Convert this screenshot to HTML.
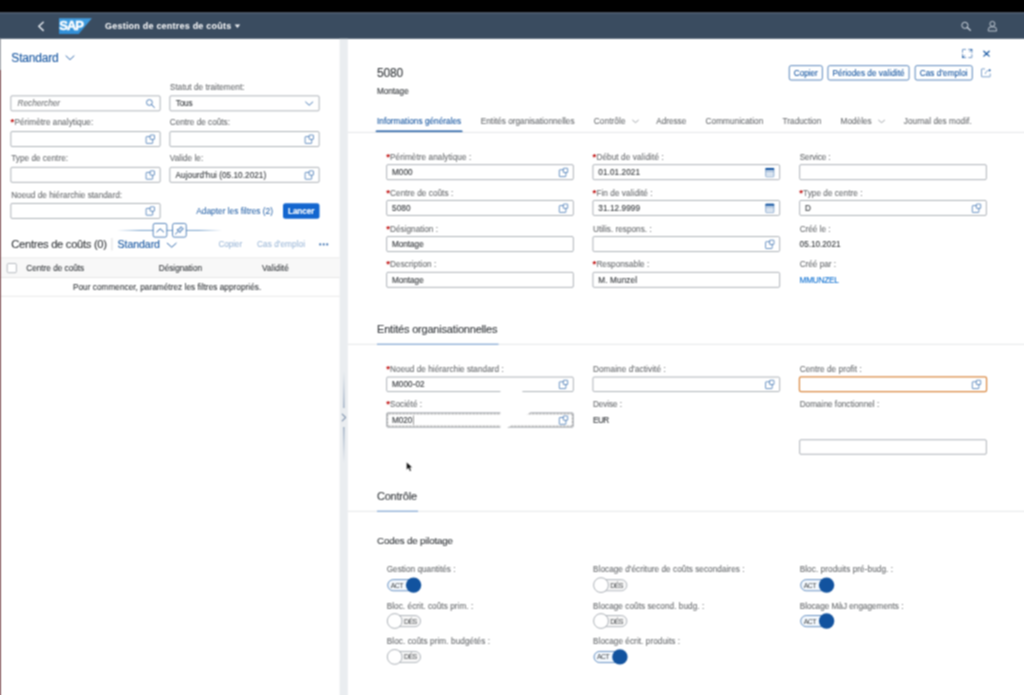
<!DOCTYPE html>
<html lang="fr"><head><meta charset="utf-8"><title>Gestion de centres de coûts</title>
<style>
html,body{margin:0;padding:0;background:#fff;}
body{width:1024px;height:695px;overflow:hidden;position:relative;font-family:"Liberation Sans",sans-serif;}
#root{position:absolute;left:0;top:0;width:1024px;height:695px;overflow:hidden;background:#fff;filter:url(#soft);}
#shapes{position:absolute;left:0;top:0;display:block;}
.t{position:absolute;display:block;white-space:pre;font-family:"Liberation Sans",sans-serif;}
</style></head><body><svg width="0" height="0" style="position:absolute"><filter id="soft" x="0" y="0" width="100%" height="100%" filterUnits="objectBoundingBox" color-interpolation-filters="sRGB"><feConvolveMatrix order="3" kernelMatrix="1 2 1 2 4 2 1 2 1" edgeMode="duplicate" preserveAlpha="true"/></filter></svg><div id="root">
<svg id="shapes" width="1024" height="695" viewBox="0 0 1024 695">
<defs><linearGradient id="gr1" x1="0" y1="0" x2="0" y2="1"><stop offset="0" stop-color="#eaedf0"/><stop offset="1" stop-color="#94a6bd"/></linearGradient><linearGradient id="gr2" x1="0" y1="0" x2="0" y2="1"><stop offset="0" stop-color="#94a6bd"/><stop offset="1" stop-color="#eaedf0"/></linearGradient><linearGradient id="sapg" x1="0" y1="0" x2="0" y2="1"><stop offset="0" stop-color="#429fe2"/><stop offset="1" stop-color="#2f8dd6"/></linearGradient><linearGradient id="gl" x1="0" y1="0" x2="1" y2="0"><stop offset="0" stop-color="#0854a0" stop-opacity="0"/><stop offset="0.22" stop-color="#0854a0" stop-opacity="0.55"/><stop offset="0.78" stop-color="#0854a0" stop-opacity="0.55"/><stop offset="1" stop-color="#0854a0" stop-opacity="0"/></linearGradient></defs>
<rect x="0" y="0" width="1024" height="12.7" fill="#000"/>
<rect x="0" y="12.7" width="1024" height="26.1" fill="#3a4c60"/>
<rect x="0" y="12.7" width="1024" height="1" fill="#52627a"/>
<rect x="0" y="38.8" width="1" height="31.5" fill="#a3a6ab"/>
<rect x="0" y="70" width="1" height="625" fill="#85585c"/>
<rect x="339.6" y="38.8" width="8.2" height="657" fill="#eaedf0"/>
<rect x="343.2" y="371" width="1.3" height="37" fill="url(#gr1)"/>
<rect x="343.2" y="427" width="1.3" height="36" fill="url(#gr2)"/>
<g transform="translate(341 413)"><path d="M1.2 1.2L4.6 4.5L1.2 7.8" fill="none" stroke="#7f93ad" stroke-width="1.1" stroke-linecap="round" stroke-linejoin="round"/></g>
<g transform="translate(37 21)"><path d="M6.2 1.2L1.8 5.3L6.2 9.4" fill="none" stroke="#e3e8ee" stroke-width="1.5" stroke-linecap="round" stroke-linejoin="round"/></g>
<g transform="translate(59 18.2)"><path d="M0 0H32.9L19.7 15.7H0Z" fill="url(#sapg)"/><text x="0.3" y="12.3" font-family="Liberation Sans, sans-serif" font-weight="bold" font-size="12.6" fill="#fff" stroke="#fff" stroke-width="0.45" textLength="23.6" lengthAdjust="spacingAndGlyphs" letter-spacing="-1">SAP</text></g>
<g transform="translate(234.4 24.3)"><path d="M0.2 0.3H5.8L3 3.7Z" fill="#eef1f5"/></g>
<g transform="translate(960 21)"><circle cx="4.9" cy="4.3" r="3.1" fill="none" stroke="#cdd5de" stroke-width="1.0"/><path d="M7.3 6.6L10.3 9.2" stroke="#cdd5de" stroke-width="1.3" stroke-linecap="round"/></g>
<g transform="translate(987 20)"><circle cx="5.4" cy="3.9" r="2.5" fill="none" stroke="#cdd5de" stroke-width="0.9"/><path d="M1.3 11V9.6Q1.3 6.9 4 6.9H6.8Q9.5 6.9 9.5 9.6V11Z" fill="none" stroke="#cdd5de" stroke-width="0.9" stroke-linejoin="round"/></g>
<g transform="translate(65.6 55.7)"><path d="M0.4 0.2L4.4 4L8.4 0.2" fill="none" stroke="#12539f" stroke-width="0.85" stroke-linecap="round" stroke-linejoin="round"/></g>
<rect x="10.85" y="95.85" width="149.3" height="15" fill="#fff" stroke="#89919a" stroke-width="0.7" rx="1.25"/>
<rect x="169.85" y="95.85" width="149.3" height="15" fill="#fff" stroke="#89919a" stroke-width="0.7" rx="1.25"/>
<rect x="10.85" y="131.55" width="149.3" height="15" fill="#fff" stroke="#89919a" stroke-width="0.7" rx="1.25"/>
<rect x="169.85" y="131.55" width="149.3" height="15" fill="#fff" stroke="#89919a" stroke-width="0.7" rx="1.25"/>
<rect x="10.85" y="167.35" width="149.3" height="15" fill="#fff" stroke="#89919a" stroke-width="0.7" rx="1.25"/>
<rect x="169.85" y="167.35" width="149.3" height="15" fill="#fff" stroke="#89919a" stroke-width="0.7" rx="1.25"/>
<rect x="10.85" y="203.45" width="149.3" height="15" fill="#fff" stroke="#89919a" stroke-width="0.7" rx="1.25"/>
<g transform="translate(145.5 98.6)"><circle cx="3.9" cy="3.9" r="2.9" fill="none" stroke="#12539f" stroke-width="0.7"/><path d="M6.1 6.1L8.9 8.9" stroke="#12539f" stroke-width="0.85" stroke-linecap="round"/></g>
<g transform="translate(305.2 101.8)"><path d="M0.4 0.2L4 3.4L7.6 0.2" fill="none" stroke="#12539f" stroke-width="0.75" stroke-linecap="round" stroke-linejoin="round"/></g>
<g transform="translate(145.8 134.7)"><path d="M4.3 1.9H0.9Q0.3 1.9 0.3 2.5V8.1Q0.3 8.7 0.9 8.7H6.3Q6.9 8.7 6.9 8.1V4.6" fill="none" stroke="#12539f" stroke-width="0.62"/><rect x="4.3" y="0.35" width="4.4" height="4.3" rx="0.5" fill="none" stroke="#12539f" stroke-width="0.62"/></g>
<g transform="translate(304.8 134.7)"><path d="M4.3 1.9H0.9Q0.3 1.9 0.3 2.5V8.1Q0.3 8.7 0.9 8.7H6.3Q6.9 8.7 6.9 8.1V4.6" fill="none" stroke="#12539f" stroke-width="0.62"/><rect x="4.3" y="0.35" width="4.4" height="4.3" rx="0.5" fill="none" stroke="#12539f" stroke-width="0.62"/></g>
<g transform="translate(145.8 170.5)"><path d="M4.3 1.9H0.9Q0.3 1.9 0.3 2.5V8.1Q0.3 8.7 0.9 8.7H6.3Q6.9 8.7 6.9 8.1V4.6" fill="none" stroke="#12539f" stroke-width="0.62"/><rect x="4.3" y="0.35" width="4.4" height="4.3" rx="0.5" fill="none" stroke="#12539f" stroke-width="0.62"/></g>
<g transform="translate(304.8 170.5)"><path d="M4.3 1.9H0.9Q0.3 1.9 0.3 2.5V8.1Q0.3 8.7 0.9 8.7H6.3Q6.9 8.7 6.9 8.1V4.6" fill="none" stroke="#12539f" stroke-width="0.62"/><rect x="4.3" y="0.35" width="4.4" height="4.3" rx="0.5" fill="none" stroke="#12539f" stroke-width="0.62"/></g>
<g transform="translate(145.8 206.5)"><path d="M4.3 1.9H0.9Q0.3 1.9 0.3 2.5V8.1Q0.3 8.7 0.9 8.7H6.3Q6.9 8.7 6.9 8.1V4.6" fill="none" stroke="#12539f" stroke-width="0.62"/><rect x="4.3" y="0.35" width="4.4" height="4.3" rx="0.5" fill="none" stroke="#12539f" stroke-width="0.62"/></g>
<rect x="283" y="203.2" width="36.5" height="15.6" fill="#1366cf" rx="2.5"/>
<rect x="117" y="229.9" width="105" height="1" fill="url(#gl)"/>
<rect x="153.15" y="223.45" width="13.7" height="13.7" fill="#fff" stroke="#12539f" stroke-width="0.7" rx="1.85"/>
<rect x="172.55" y="223.45" width="13.7" height="13.7" fill="#fff" stroke="#12539f" stroke-width="0.7" rx="1.85"/>
<g transform="translate(156.2 227.6)"><path d="M0.6 4.3L4 1.2L7.4 4.3" fill="none" stroke="#12539f" stroke-width="0.9" stroke-linecap="round" stroke-linejoin="round"/></g>
<g transform="translate(174.8 225.8)"><path d="M0.6 8.3L3.4 5.6" stroke="#12539f" stroke-width="0.8" stroke-linecap="round"/><path d="M2.2 3.9L5.2 6.9L5.8 5.6L8.6 3.2L6.2 0.8L3.6 3.5Z" fill="#c9daee" stroke="#12539f" stroke-width="0.7" stroke-linejoin="round"/></g>
<rect x="111.5" y="238" width="0.9" height="12.5" fill="#d9d9d9"/>
<g transform="translate(166.8 243)"><path d="M0.4 0.2L4.9 4.2L9.4 0.2" fill="none" stroke="#12539f" stroke-width="0.85" stroke-linecap="round" stroke-linejoin="round"/></g>
<circle cx="320.2" cy="244.4" r="1.1" fill="#12539f" opacity="0.8"/>
<circle cx="323.7" cy="244.4" r="1.1" fill="#12539f" opacity="0.8"/>
<circle cx="327.2" cy="244.4" r="1.1" fill="#12539f" opacity="0.8"/>
<rect x="1" y="257.7" width="338.6" height="20.2" fill="#f8f8f8"/>
<rect x="1" y="257.5" width="338.6" height="0.8" fill="#e6e6e6"/>
<rect x="1" y="277.2" width="338.6" height="0.8" fill="#e2e2e2"/>
<rect x="7.2" y="263.5" width="9.2" height="9.2" fill="#fff" stroke="#89919a" stroke-width="0.6" rx="1.3"/>
<rect x="1" y="295.8" width="338.6" height="0.8" fill="#e2e2e2"/>
<g transform="translate(962 48.9)"><g fill="none" stroke="#12539f" stroke-width="0.6" stroke-linecap="round" stroke-linejoin="round"><path d="M0.5 3.4V0.9Q0.5 0.5 0.9 0.5H3.6"/><path d="M9.9 5.8V8.3Q9.9 8.7 9.5 8.7H6.8"/><path d="M6.6 0.5H9.9V3.8M9.9 0.5L7.6 2.8"/><path d="M3.8 8.7H0.5V5.4M0.5 8.7L2.8 6.4"/></g><path d="M10.1 0.3V2.2L8.2 0.3Z M0.3 8.9V7L2.2 8.9Z" fill="#12539f"/></g>
<g transform="translate(983 50.5)"><path d="M0.8 0.7L6.2 5.6M6.2 0.7L0.8 5.6" stroke="#12539f" stroke-width="1.2" stroke-linecap="round"/></g>
<rect x="789.25" y="65.65" width="33.1" height="14.4" fill="#fff" stroke="#12539f" stroke-width="0.7" rx="1.85"/>
<rect x="827.95" y="65.65" width="81.1" height="14.4" fill="#fff" stroke="#12539f" stroke-width="0.7" rx="1.85"/>
<rect x="915.15" y="65.65" width="57.1" height="14.4" fill="#fff" stroke="#12539f" stroke-width="0.7" rx="1.85"/>
<g transform="translate(981 68)"><g fill="none" stroke="#12539f" stroke-width="0.6" stroke-linecap="round" stroke-linejoin="round" opacity="0.9"><path d="M3.6 0.9H1Q0.5 0.9 0.5 1.4V8.3Q0.5 8.8 1 8.8H8.7Q9.2 8.8 9.2 8.3V6"/><path d="M4.3 5.6Q4.7 2.4 9 2.2"/></g><path d="M8 0.7L10 2.2L8 3.7Z" fill="#12539f" opacity="0.85"/></g>
<rect x="375.6" y="130.4" width="87" height="2.1" fill="#12539f" rx="1"/>
<rect x="347.8" y="131.9" width="676.2" height="1" fill="#e4e6e8"/>
<g transform="translate(632.2 120)"><path d="M0.4 0.2L3.3 2.6L6.2 0.2" fill="none" stroke="#8c9095" stroke-width="0.8" stroke-linecap="round" stroke-linejoin="round"/></g>
<g transform="translate(878.2 120)"><path d="M0.4 0.2L3.4 2.6L6.4 0.2" fill="none" stroke="#8c9095" stroke-width="0.8" stroke-linecap="round" stroke-linejoin="round"/></g>
<rect x="386.65" y="164.65" width="186.7" height="15" fill="#fff" stroke="#89919a" stroke-width="0.7" rx="1.25"/>
<rect x="386.65" y="200.45" width="186.7" height="15" fill="#fff" stroke="#89919a" stroke-width="0.7" rx="1.25"/>
<rect x="386.65" y="236.55" width="186.7" height="15" fill="#fff" stroke="#89919a" stroke-width="0.7" rx="1.25"/>
<rect x="386.65" y="272.35" width="186.7" height="15" fill="#fff" stroke="#89919a" stroke-width="0.7" rx="1.25"/>
<rect x="592.95" y="164.65" width="186.7" height="15" fill="#fff" stroke="#89919a" stroke-width="0.7" rx="1.25"/>
<rect x="592.95" y="200.45" width="186.7" height="15" fill="#fff" stroke="#89919a" stroke-width="0.7" rx="1.25"/>
<rect x="592.95" y="236.55" width="186.7" height="15" fill="#fff" stroke="#89919a" stroke-width="0.7" rx="1.25"/>
<rect x="592.95" y="272.35" width="186.7" height="15" fill="#fff" stroke="#89919a" stroke-width="0.7" rx="1.25"/>
<rect x="799.65" y="164.65" width="186.7" height="15" fill="#fff" stroke="#89919a" stroke-width="0.7" rx="1.25"/>
<rect x="799.65" y="200.45" width="186.7" height="15" fill="#fff" stroke="#89919a" stroke-width="0.7" rx="1.25"/>
<g transform="translate(559 167.9)"><path d="M4.3 1.9H0.9Q0.3 1.9 0.3 2.5V8.1Q0.3 8.7 0.9 8.7H6.3Q6.9 8.7 6.9 8.1V4.6" fill="none" stroke="#12539f" stroke-width="0.62"/><rect x="4.3" y="0.35" width="4.4" height="4.3" rx="0.5" fill="none" stroke="#12539f" stroke-width="0.62"/></g>
<g transform="translate(559 203.7)"><path d="M4.3 1.9H0.9Q0.3 1.9 0.3 2.5V8.1Q0.3 8.7 0.9 8.7H6.3Q6.9 8.7 6.9 8.1V4.6" fill="none" stroke="#12539f" stroke-width="0.62"/><rect x="4.3" y="0.35" width="4.4" height="4.3" rx="0.5" fill="none" stroke="#12539f" stroke-width="0.62"/></g>
<g transform="translate(765.3 167.75)"><rect x="0.4" y="0.6" width="8.2" height="8.5" rx="0.7" fill="#edf2f8" stroke="#12539f" stroke-width="0.55" stroke-opacity="0.75"/><rect x="0.2" y="0.3" width="8.6" height="1.9" rx="0.5" fill="#12539f"/><path d="M0.4 3.5H8.6" stroke="#12539f" stroke-width="0.6" opacity="0.8"/><path d="M0.5 5.2H8.5M0.5 6.9H8.5" stroke="#12539f" stroke-width="0.45" opacity="0.35"/></g>
<g transform="translate(765.3 203.55)"><rect x="0.4" y="0.6" width="8.2" height="8.5" rx="0.7" fill="#edf2f8" stroke="#12539f" stroke-width="0.55" stroke-opacity="0.75"/><rect x="0.2" y="0.3" width="8.6" height="1.9" rx="0.5" fill="#12539f"/><path d="M0.4 3.5H8.6" stroke="#12539f" stroke-width="0.6" opacity="0.8"/><path d="M0.5 5.2H8.5M0.5 6.9H8.5" stroke="#12539f" stroke-width="0.45" opacity="0.35"/></g>
<g transform="translate(765.3 239.8)"><path d="M4.3 1.9H0.9Q0.3 1.9 0.3 2.5V8.1Q0.3 8.7 0.9 8.7H6.3Q6.9 8.7 6.9 8.1V4.6" fill="none" stroke="#12539f" stroke-width="0.62"/><rect x="4.3" y="0.35" width="4.4" height="4.3" rx="0.5" fill="none" stroke="#12539f" stroke-width="0.62"/></g>
<g transform="translate(972 203.7)"><path d="M4.3 1.9H0.9Q0.3 1.9 0.3 2.5V8.1Q0.3 8.7 0.9 8.7H6.3Q6.9 8.7 6.9 8.1V4.6" fill="none" stroke="#12539f" stroke-width="0.62"/><rect x="4.3" y="0.35" width="4.4" height="4.3" rx="0.5" fill="none" stroke="#12539f" stroke-width="0.62"/></g>
<rect x="347.8" y="343.8" width="676.2" height="1" fill="#e4e6e8"/>
<rect x="377" y="343.7" width="121.5" height="1" fill="#6d9bd1"/>
<rect x="386.65" y="377.05" width="186.7" height="14.5" fill="#fff" stroke="#89919a" stroke-width="0.7" rx="1.25"/>
<g transform="translate(559 379.9)"><path d="M4.3 1.9H0.9Q0.3 1.9 0.3 2.5V8.1Q0.3 8.7 0.9 8.7H6.3Q6.9 8.7 6.9 8.1V4.6" fill="none" stroke="#12539f" stroke-width="0.62"/><rect x="4.3" y="0.35" width="4.4" height="4.3" rx="0.5" fill="none" stroke="#12539f" stroke-width="0.62"/></g>
<rect x="386.65" y="412.75" width="186.7" height="14.5" fill="#fff" stroke="#89919a" stroke-width="0.7" rx="1.25"/>
<rect x="387.65" y="413.85" width="184.7" height="12.3" fill="none" stroke="#333" stroke-width="0.7" stroke-dasharray="0.7 0.7"/>
<rect x="413" y="415.6" width="0.6" height="9.1" fill="#555"/>
<g transform="translate(559 415.6)"><path d="M4.3 1.9H0.9Q0.3 1.9 0.3 2.5V8.1Q0.3 8.7 0.9 8.7H6.3Q6.9 8.7 6.9 8.1V4.6" fill="none" stroke="#12539f" stroke-width="0.62"/><rect x="4.3" y="0.35" width="4.4" height="4.3" rx="0.5" fill="none" stroke="#12539f" stroke-width="0.62"/></g>
<rect x="592.95" y="377.05" width="186.7" height="14.5" fill="#fff" stroke="#89919a" stroke-width="0.7" rx="1.25"/>
<g transform="translate(765.3 379.9)"><path d="M4.3 1.9H0.9Q0.3 1.9 0.3 2.5V8.1Q0.3 8.7 0.9 8.7H6.3Q6.9 8.7 6.9 8.1V4.6" fill="none" stroke="#12539f" stroke-width="0.62"/><rect x="4.3" y="0.35" width="4.4" height="4.3" rx="0.5" fill="none" stroke="#12539f" stroke-width="0.62"/></g>
<rect x="799.42" y="376.82" width="187.15" height="14.75" fill="#fff" stroke="#d98840" stroke-width="1.25" rx="1.58"/>
<g transform="translate(972 379.9)"><path d="M4.3 1.9H0.9Q0.3 1.9 0.3 2.5V8.1Q0.3 8.7 0.9 8.7H6.3Q6.9 8.7 6.9 8.1V4.6" fill="none" stroke="#12539f" stroke-width="0.62"/><rect x="4.3" y="0.35" width="4.4" height="4.3" rx="0.5" fill="none" stroke="#12539f" stroke-width="0.62"/></g>
<rect x="799.65" y="439.75" width="186.7" height="14.5" fill="#fff" stroke="#89919a" stroke-width="0.7" rx="1.25"/>
<path d="M500.4 386H522.4V393L531.5 411.5L504.8 429.5H500.4Z" fill="#fff"/>
<g transform="translate(405.6 461.4)"><path d="M1 0.8V8.4L2.9 6.7L4.3 9.9L5.6 9.3L4.3 6.2L6.7 6Z" fill="#111" stroke="#fff" stroke-width="0.3"/></g>
<rect x="347.8" y="510.8" width="676.2" height="1" fill="#e4e6e8"/>
<rect x="377" y="510.7" width="41" height="1" fill="#6d9bd1"/>
<rect x="387.71" y="579.61" width="31.38" height="11.18" fill="#f3f8fd" stroke="#12539f" stroke-width="0.62" rx="5.59"/>
<circle cx="413.6" cy="585.1" r="7.7" fill="#12539f"/>
<rect x="388.61" y="615.51" width="31.98" height="11.18" fill="#f6f6f6" stroke="#89919a" stroke-width="0.62" rx="5.59"/>
<circle cx="394.7" cy="621" r="7.4" fill="#fff" stroke="#89919a" stroke-width="0.7"/>
<rect x="388.61" y="651.41" width="31.98" height="11.18" fill="#f6f6f6" stroke="#89919a" stroke-width="0.62" rx="5.59"/>
<circle cx="394.7" cy="656.9" r="7.4" fill="#fff" stroke="#89919a" stroke-width="0.7"/>
<rect x="594.91" y="579.61" width="31.98" height="11.18" fill="#f6f6f6" stroke="#89919a" stroke-width="0.62" rx="5.59"/>
<circle cx="601" cy="585.1" r="7.4" fill="#fff" stroke="#89919a" stroke-width="0.7"/>
<rect x="594.91" y="615.51" width="31.98" height="11.18" fill="#f6f6f6" stroke="#89919a" stroke-width="0.62" rx="5.59"/>
<circle cx="601" cy="621" r="7.4" fill="#fff" stroke="#89919a" stroke-width="0.7"/>
<rect x="594.01" y="651.41" width="31.38" height="11.18" fill="#f3f8fd" stroke="#12539f" stroke-width="0.62" rx="5.59"/>
<circle cx="619.9" cy="656.9" r="7.7" fill="#12539f"/>
<rect x="800.71" y="579.61" width="31.38" height="11.18" fill="#f3f8fd" stroke="#12539f" stroke-width="0.62" rx="5.59"/>
<circle cx="826.6" cy="585.1" r="7.7" fill="#12539f"/>
<rect x="800.71" y="615.51" width="31.38" height="11.18" fill="#f3f8fd" stroke="#12539f" stroke-width="0.62" rx="5.59"/>
<circle cx="826.6" cy="621" r="7.7" fill="#12539f"/>
</svg>
<span class="t" style="left:105.00px;top:20px;font-size:9px;line-height:13px;color:#ffffff;letter-spacing:0.217px;font-weight:bold;">Gestion de centres de coûts</span>
<span class="t" style="left:11.30px;top:50px;font-size:12px;line-height:16px;color:#12539f;letter-spacing:-0.172px;-webkit-text-stroke:0.1px #12539f;">Standard</span>
<span class="t" style="left:170.00px;top:82px;font-size:8.2px;line-height:12px;color:#6a6d70;letter-spacing:0.038px;-webkit-text-stroke:0.1px #6a6d70;">Statut de traitement:</span>
<span class="t" style="left:17.60px;top:98px;font-size:8.2px;line-height:12px;color:#74777a;letter-spacing:0.008px;font-style:italic;-webkit-text-stroke:0.1px #74777a;">Rechercher</span>
<span class="t" style="left:175.80px;top:98px;font-size:8.2px;line-height:12px;color:#32363a;letter-spacing:-0.199px;-webkit-text-stroke:0.1px #32363a;">Tous</span>
<span class="t" style="left:10.60px;top:115px;font-size:9.5px;line-height:14px;color:#bb0000;font-weight:bold;">*</span>
<span class="t" style="left:14.40px;top:117px;font-size:8.2px;line-height:12px;color:#6a6d70;letter-spacing:0.071px;-webkit-text-stroke:0.1px #6a6d70;">Périmètre analytique:</span>
<span class="t" style="left:169.80px;top:117px;font-size:8.2px;line-height:12px;color:#6a6d70;letter-spacing:0.008px;-webkit-text-stroke:0.1px #6a6d70;">Centre de coûts:</span>
<span class="t" style="left:11.30px;top:153px;font-size:8.2px;line-height:12px;color:#6a6d70;letter-spacing:0.019px;-webkit-text-stroke:0.1px #6a6d70;">Type de centre:</span>
<span class="t" style="left:169.80px;top:153px;font-size:8.2px;line-height:12px;color:#6a6d70;letter-spacing:0.036px;-webkit-text-stroke:0.1px #6a6d70;">Valide le:</span>
<span class="t" style="left:175.60px;top:170px;font-size:8.2px;line-height:12px;color:#32363a;letter-spacing:0.051px;-webkit-text-stroke:0.1px #32363a;">Aujourd'hui (05.10.2021)</span>
<span class="t" style="left:11.20px;top:190px;font-size:8.2px;line-height:12px;color:#6a6d70;letter-spacing:0.023px;-webkit-text-stroke:0.1px #6a6d70;">Noeud de hiérarchie standard:</span>
<span class="t" style="left:196.30px;top:205px;font-size:8.4px;line-height:12px;color:#12539f;letter-spacing:-0.026px;">Adapter les filtres (2)</span>
<span class="t" style="left:288.00px;top:206px;font-size:8.2px;line-height:12px;color:#ffffff;letter-spacing:-0.092px;font-weight:bold;-webkit-text-stroke:0.1px #ffffff;">Lancer</span>
<span class="t" style="left:11.30px;top:237px;font-size:11.2px;line-height:15px;color:#32363a;letter-spacing:-0.298px;-webkit-text-stroke:0.1px #32363a;">Centres de coûts (0)</span>
<span class="t" style="left:117.60px;top:237px;font-size:10.6px;line-height:15px;color:#12539f;letter-spacing:-0.086px;-webkit-text-stroke:0.1px #12539f;">Standard</span>
<span class="t" style="left:218.40px;top:239px;font-size:8.2px;line-height:12px;color:#12539f;letter-spacing:-0.045px;opacity:0.42;-webkit-text-stroke:0.1px #12539f;">Copier</span>
<span class="t" style="left:257.00px;top:239px;font-size:8.2px;line-height:12px;color:#12539f;letter-spacing:0.084px;opacity:0.42;-webkit-text-stroke:0.1px #12539f;">Cas d'emploi</span>
<span class="t" style="left:26.30px;top:263px;font-size:8.2px;line-height:12px;color:#32363a;letter-spacing:0.006px;-webkit-text-stroke:0.1px #32363a;">Centre de coûts</span>
<span class="t" style="left:158.80px;top:263px;font-size:8.2px;line-height:12px;color:#32363a;letter-spacing:-0.005px;-webkit-text-stroke:0.1px #32363a;">Désignation</span>
<span class="t" style="left:262.00px;top:263px;font-size:8.2px;line-height:12px;color:#32363a;letter-spacing:0.064px;-webkit-text-stroke:0.1px #32363a;">Validité</span>
<span class="t" style="left:73.00px;top:282px;font-size:8.2px;line-height:12px;color:#32363a;letter-spacing:0.052px;-webkit-text-stroke:0.1px #32363a;">Pour commencer, paramétrez les filtres appropriés.</span>
<span class="t" style="left:377.00px;top:65px;font-size:12px;line-height:16px;color:#32363a;letter-spacing:-0.201px;-webkit-text-stroke:0.1px #32363a;">5080</span>
<span class="t" style="left:377.00px;top:86px;font-size:8.2px;line-height:12px;color:#32363a;letter-spacing:-0.029px;-webkit-text-stroke:0.1px #32363a;">Montage</span>
<span class="t" style="left:793.80px;top:68px;font-size:8.2px;line-height:12px;color:#12539f;letter-spacing:-0.045px;-webkit-text-stroke:0.1px #12539f;">Copier</span>
<span class="t" style="left:832.40px;top:68px;font-size:8.2px;line-height:12px;color:#12539f;letter-spacing:0.038px;-webkit-text-stroke:0.1px #12539f;">Périodes de validité</span>
<span class="t" style="left:919.70px;top:68px;font-size:8.2px;line-height:12px;color:#12539f;letter-spacing:0.075px;-webkit-text-stroke:0.1px #12539f;">Cas d'emploi</span>
<span class="t" style="left:377.00px;top:116px;font-size:8.2px;line-height:12px;color:#12539f;letter-spacing:0.043px;-webkit-text-stroke:0.1px #12539f;">Informations générales</span>
<span class="t" style="left:480.80px;top:116px;font-size:8.2px;line-height:12px;color:#6a6d70;letter-spacing:0.015px;-webkit-text-stroke:0.1px #6a6d70;">Entités organisationnelles</span>
<span class="t" style="left:593.80px;top:116px;font-size:8.2px;line-height:12px;color:#6a6d70;letter-spacing:0.107px;-webkit-text-stroke:0.1px #6a6d70;">Contrôle</span>
<span class="t" style="left:656.30px;top:116px;font-size:8.2px;line-height:12px;color:#6a6d70;letter-spacing:-0.024px;-webkit-text-stroke:0.1px #6a6d70;">Adresse</span>
<span class="t" style="left:705.60px;top:116px;font-size:8.2px;line-height:12px;color:#6a6d70;letter-spacing:0.059px;-webkit-text-stroke:0.1px #6a6d70;">Communication</span>
<span class="t" style="left:782.60px;top:116px;font-size:8.2px;line-height:12px;color:#6a6d70;letter-spacing:0.023px;-webkit-text-stroke:0.1px #6a6d70;">Traduction</span>
<span class="t" style="left:840.60px;top:116px;font-size:8.2px;line-height:12px;color:#6a6d70;letter-spacing:0.024px;-webkit-text-stroke:0.1px #6a6d70;">Modèles</span>
<span class="t" style="left:903.80px;top:116px;font-size:8.2px;line-height:12px;color:#6a6d70;letter-spacing:0.058px;-webkit-text-stroke:0.1px #6a6d70;">Journal des modif.</span>
<span class="t" style="left:386.30px;top:150px;font-size:9.5px;line-height:14px;color:#bb0000;font-weight:bold;">*</span>
<span class="t" style="left:390.10px;top:152px;font-size:8.2px;line-height:12px;color:#6a6d70;letter-spacing:0.069px;-webkit-text-stroke:0.1px #6a6d70;">Périmètre analytique :</span>
<span class="t" style="left:386.30px;top:186px;font-size:9.5px;line-height:14px;color:#bb0000;font-weight:bold;">*</span>
<span class="t" style="left:390.10px;top:188px;font-size:8.2px;line-height:12px;color:#6a6d70;letter-spacing:0.046px;-webkit-text-stroke:0.1px #6a6d70;">Centre de coûts :</span>
<span class="t" style="left:386.30px;top:222px;font-size:9.5px;line-height:14px;color:#bb0000;font-weight:bold;">*</span>
<span class="t" style="left:390.10px;top:224px;font-size:8.2px;line-height:12px;color:#6a6d70;letter-spacing:0.009px;-webkit-text-stroke:0.1px #6a6d70;">Désignation :</span>
<span class="t" style="left:386.30px;top:257px;font-size:9.5px;line-height:14px;color:#bb0000;font-weight:bold;">*</span>
<span class="t" style="left:390.10px;top:259px;font-size:8.2px;line-height:12px;color:#6a6d70;letter-spacing:0.049px;-webkit-text-stroke:0.1px #6a6d70;">Description :</span>
<span class="t" style="left:392.00px;top:167px;font-size:8.2px;line-height:12px;color:#32363a;letter-spacing:0.005px;-webkit-text-stroke:0.1px #32363a;">M000</span>
<span class="t" style="left:392.00px;top:203px;font-size:8.2px;line-height:12px;color:#32363a;letter-spacing:0.094px;-webkit-text-stroke:0.1px #32363a;">5080</span>
<span class="t" style="left:392.00px;top:239px;font-size:8.2px;line-height:12px;color:#32363a;letter-spacing:-0.029px;-webkit-text-stroke:0.1px #32363a;">Montage</span>
<span class="t" style="left:392.00px;top:275px;font-size:8.2px;line-height:12px;color:#32363a;letter-spacing:-0.029px;-webkit-text-stroke:0.1px #32363a;">Montage</span>
<span class="t" style="left:592.60px;top:150px;font-size:9.5px;line-height:14px;color:#bb0000;font-weight:bold;">*</span>
<span class="t" style="left:596.40px;top:152px;font-size:8.2px;line-height:12px;color:#6a6d70;letter-spacing:0.097px;-webkit-text-stroke:0.1px #6a6d70;">Début de validité :</span>
<span class="t" style="left:592.60px;top:186px;font-size:9.5px;line-height:14px;color:#bb0000;font-weight:bold;">*</span>
<span class="t" style="left:596.40px;top:188px;font-size:8.2px;line-height:12px;color:#6a6d70;letter-spacing:0.064px;-webkit-text-stroke:0.1px #6a6d70;">Fin de validité :</span>
<span class="t" style="left:593.00px;top:224px;font-size:8.2px;line-height:12px;color:#6a6d70;letter-spacing:0.026px;-webkit-text-stroke:0.1px #6a6d70;">Utilis. respons. :</span>
<span class="t" style="left:592.60px;top:257px;font-size:9.5px;line-height:14px;color:#bb0000;font-weight:bold;">*</span>
<span class="t" style="left:596.40px;top:259px;font-size:8.2px;line-height:12px;color:#6a6d70;letter-spacing:0.038px;-webkit-text-stroke:0.1px #6a6d70;">Responsable :</span>
<span class="t" style="left:598.30px;top:167px;font-size:8.2px;line-height:12px;color:#32363a;letter-spacing:0.080px;-webkit-text-stroke:0.1px #32363a;">01.01.2021</span>
<span class="t" style="left:598.30px;top:203px;font-size:8.2px;line-height:12px;color:#32363a;letter-spacing:0.080px;-webkit-text-stroke:0.1px #32363a;">31.12.9999</span>
<span class="t" style="left:598.30px;top:275px;font-size:8.2px;line-height:12px;color:#32363a;letter-spacing:0.117px;-webkit-text-stroke:0.1px #32363a;">M. Munzel</span>
<span class="t" style="left:799.70px;top:152px;font-size:8.2px;line-height:12px;color:#6a6d70;letter-spacing:-0.132px;-webkit-text-stroke:0.1px #6a6d70;">Service :</span>
<span class="t" style="left:799.30px;top:186px;font-size:9.5px;line-height:14px;color:#bb0000;font-weight:bold;">*</span>
<span class="t" style="left:803.10px;top:188px;font-size:8.2px;line-height:12px;color:#6a6d70;letter-spacing:0.045px;-webkit-text-stroke:0.1px #6a6d70;">Type de centre :</span>
<span class="t" style="left:799.70px;top:224px;font-size:8.2px;line-height:12px;color:#6a6d70;letter-spacing:-0.019px;-webkit-text-stroke:0.1px #6a6d70;">Créé le :</span>
<span class="t" style="left:799.70px;top:259px;font-size:8.2px;line-height:12px;color:#6a6d70;letter-spacing:-0.012px;-webkit-text-stroke:0.1px #6a6d70;">Créé par :</span>
<span class="t" style="left:805.00px;top:203px;font-size:8.2px;line-height:12px;color:#32363a;-webkit-text-stroke:0.1px #32363a;">D</span>
<span class="t" style="left:799.60px;top:239px;font-size:8.2px;line-height:12px;color:#32363a;letter-spacing:-0.009px;-webkit-text-stroke:0.1px #32363a;">05.10.2021</span>
<span class="t" style="left:799.60px;top:275px;font-size:8.2px;line-height:12px;color:#0a6ed1;letter-spacing:-0.231px;-webkit-text-stroke:0.1px #0a6ed1;">MMUNZEL</span>
<span class="t" style="left:377.00px;top:322px;font-size:11px;line-height:15px;color:#32363a;letter-spacing:-0.194px;-webkit-text-stroke:0.1px #32363a;">Entités organisationnelles</span>
<span class="t" style="left:386.30px;top:362px;font-size:9.5px;line-height:14px;color:#bb0000;font-weight:bold;">*</span>
<span class="t" style="left:390.10px;top:364px;font-size:8.2px;line-height:12px;color:#6a6d70;letter-spacing:0.040px;-webkit-text-stroke:0.1px #6a6d70;">Noeud de hiérarchie standard :</span>
<span class="t" style="left:392.00px;top:379px;font-size:8.2px;line-height:12px;color:#32363a;letter-spacing:0.045px;-webkit-text-stroke:0.1px #32363a;">M000-02</span>
<span class="t" style="left:386.30px;top:397px;font-size:9.5px;line-height:14px;color:#bb0000;font-weight:bold;">*</span>
<span class="t" style="left:390.10px;top:399px;font-size:8.2px;line-height:12px;color:#6a6d70;letter-spacing:0.005px;-webkit-text-stroke:0.1px #6a6d70;">Société :</span>
<span class="t" style="left:392.00px;top:415px;font-size:8.2px;line-height:12px;color:#32363a;letter-spacing:-0.061px;-webkit-text-stroke:0.1px #32363a;">M020</span>
<span class="t" style="left:593.00px;top:364px;font-size:8.2px;line-height:12px;color:#6a6d70;letter-spacing:0.079px;-webkit-text-stroke:0.1px #6a6d70;">Domaine d'activité :</span>
<span class="t" style="left:593.00px;top:399px;font-size:8.2px;line-height:12px;color:#6a6d70;letter-spacing:-0.083px;-webkit-text-stroke:0.1px #6a6d70;">Devise :</span>
<span class="t" style="left:593.00px;top:415px;font-size:8.2px;line-height:12px;color:#32363a;letter-spacing:-0.548px;-webkit-text-stroke:0.1px #32363a;">EUR</span>
<span class="t" style="left:799.70px;top:364px;font-size:8.2px;line-height:12px;color:#6a6d70;letter-spacing:0.060px;-webkit-text-stroke:0.1px #6a6d70;">Centre de profit :</span>
<span class="t" style="left:799.70px;top:399px;font-size:8.2px;line-height:12px;color:#6a6d70;letter-spacing:0.015px;-webkit-text-stroke:0.1px #6a6d70;">Domaine fonctionnel :</span>
<span class="t" style="left:377.00px;top:489px;font-size:11px;line-height:15px;color:#32363a;letter-spacing:-0.225px;-webkit-text-stroke:0.1px #32363a;">Contrôle</span>
<span class="t" style="left:377.00px;top:534px;font-size:9.8px;line-height:14px;color:#32363a;letter-spacing:-0.187px;-webkit-text-stroke:0.1px #32363a;">Codes de pilotage</span>
<span class="t" style="left:386.70px;top:564px;font-size:8.2px;line-height:12px;color:#6a6d70;letter-spacing:0.029px;-webkit-text-stroke:0.1px #6a6d70;">Gestion quantités :</span>
<span class="t" style="left:386.70px;top:601px;font-size:8.2px;line-height:12px;color:#6a6d70;letter-spacing:0.060px;-webkit-text-stroke:0.1px #6a6d70;">Bloc. écrit. coûts prim. :</span>
<span class="t" style="left:386.70px;top:636px;font-size:8.2px;line-height:12px;color:#6a6d70;letter-spacing:0.084px;-webkit-text-stroke:0.1px #6a6d70;">Bloc. coûts prim. budgétés :</span>
<span class="t" style="left:390.70px;top:580px;font-size:7.0px;line-height:11px;color:#45484b;letter-spacing:-0.550px;">ACT</span>
<span class="t" style="left:404.00px;top:616px;font-size:7.0px;line-height:11px;color:#45484b;letter-spacing:-0.600px;">DÉS</span>
<span class="t" style="left:404.00px;top:651px;font-size:7.0px;line-height:11px;color:#45484b;letter-spacing:-0.600px;">DÉS</span>
<span class="t" style="left:593.00px;top:564px;font-size:8.2px;line-height:12px;color:#6a6d70;letter-spacing:0.050px;-webkit-text-stroke:0.1px #6a6d70;">Blocage d'écriture de coûts secondaires :</span>
<span class="t" style="left:593.00px;top:601px;font-size:8.2px;line-height:12px;color:#6a6d70;letter-spacing:0.053px;-webkit-text-stroke:0.1px #6a6d70;">Blocage coûts second. budg. :</span>
<span class="t" style="left:593.00px;top:636px;font-size:8.2px;line-height:12px;color:#6a6d70;letter-spacing:0.060px;-webkit-text-stroke:0.1px #6a6d70;">Blocage écrit. produits :</span>
<span class="t" style="left:610.30px;top:580px;font-size:7.0px;line-height:11px;color:#45484b;letter-spacing:-0.600px;">DÉS</span>
<span class="t" style="left:610.30px;top:616px;font-size:7.0px;line-height:11px;color:#45484b;letter-spacing:-0.600px;">DÉS</span>
<span class="t" style="left:597.00px;top:651px;font-size:7.0px;line-height:11px;color:#45484b;letter-spacing:-0.550px;">ACT</span>
<span class="t" style="left:799.70px;top:564px;font-size:8.2px;line-height:12px;color:#6a6d70;letter-spacing:0.073px;-webkit-text-stroke:0.1px #6a6d70;">Bloc. produits pré-budg. :</span>
<span class="t" style="left:799.70px;top:601px;font-size:8.2px;line-height:12px;color:#6a6d70;-webkit-text-stroke:0.1px #6a6d70;">Blocage MàJ engagements :</span>
<span class="t" style="left:803.70px;top:580px;font-size:7.0px;line-height:11px;color:#45484b;letter-spacing:-0.550px;">ACT</span>
<span class="t" style="left:803.70px;top:616px;font-size:7.0px;line-height:11px;color:#45484b;letter-spacing:-0.550px;">ACT</span>
</div></body></html>
